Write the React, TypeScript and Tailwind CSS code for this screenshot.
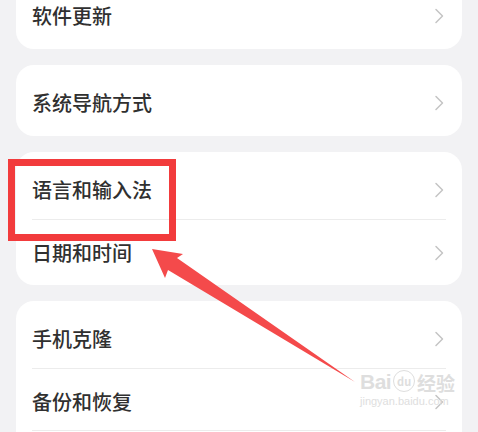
import React from "react";

const Chevron = () => (
  <svg width="10" height="16" viewBox="0 0 10 16" fill="none" className="shrink-0">
    <path d="M2 1.5 L8.5 8 L2 14.5" stroke="#c4c4c4" strokeWidth="1.5" strokeLinecap="round" strokeLinejoin="round" />
  </svg>
);

const Row = ({ label, first }: { label: string; first?: boolean }) => (
  <div
    className={
      "mx-4 h-[62px] pt-[4px] pr-[2px] flex items-center justify-between " +
      (first ? "" : "border-t border-[#ececec]")
    }
  >
    <span className="text-[20px] font-medium text-[#303030] leading-none">{label}</span>
    <Chevron />
  </div>
);

const Card = ({ items, more }: { items: string[]; more?: boolean }) => (
  <div className="bg-white rounded-[18px] pt-[5px] pb-[4px]">
    {items.map((t, i) => (
      <Row key={t} label={t} first={i === 0} />
    ))}
    {more && <div className="mx-4 h-[40px] border-t border-[#ececec]" />}
  </div>
);

export default function App() {
  return (
    <div
      className="relative w-[478px] h-[432px] overflow-hidden bg-[#f2f2f4]"
      style={{ fontFamily: '"Noto Sans CJK SC", "Noto Sans", sans-serif' }}
    >
      <div className="-mt-[22px] px-4 flex flex-col gap-4">
        <Card items={["软件更新"]} />
        <Card items={["系统导航方式"]} />
        <Card items={["语言和输入法", "日期和时间"]} />
        <Card items={["手机克隆", "备份和恢复"]} more />
      </div>

      {/* red highlight box */}
      <div className="absolute left-[8px] top-[159px] w-[168px] h-[82px] border-[7px] border-[#f23b3c]" />

      {/* arrow */}
      <svg className="absolute left-0 top-0" width="478" height="432" viewBox="0 0 478 432">
        <polygon
          points="152,249 183,254 177,258 355,382 168,270 165,278"
          fill="#f44a4b"
        />
      </svg>

      {/* watermark */}
      <div className="absolute left-[360px] top-[370px] flex flex-col items-start text-[#dedede]">
        <div className="flex items-end gap-[2px] leading-none">
          <span className="text-[21px] font-bold tracking-tight" style={{ fontFamily: '"Liberation Sans", sans-serif' }}>Bai</span>
          <span className="relative w-[22px] h-[22px] rounded-full border border-[#dedede] text-[11px] flex items-center justify-center font-bold">
            du
          </span>
          <span className="text-[19px] font-bold">经验</span>
        </div>
        <span className="mt-[4px] text-[11px] leading-none" style={{ fontFamily: '"Liberation Sans", sans-serif' }}>jingyan.baidu.com</span>
      </div>
    </div>
  );
}
